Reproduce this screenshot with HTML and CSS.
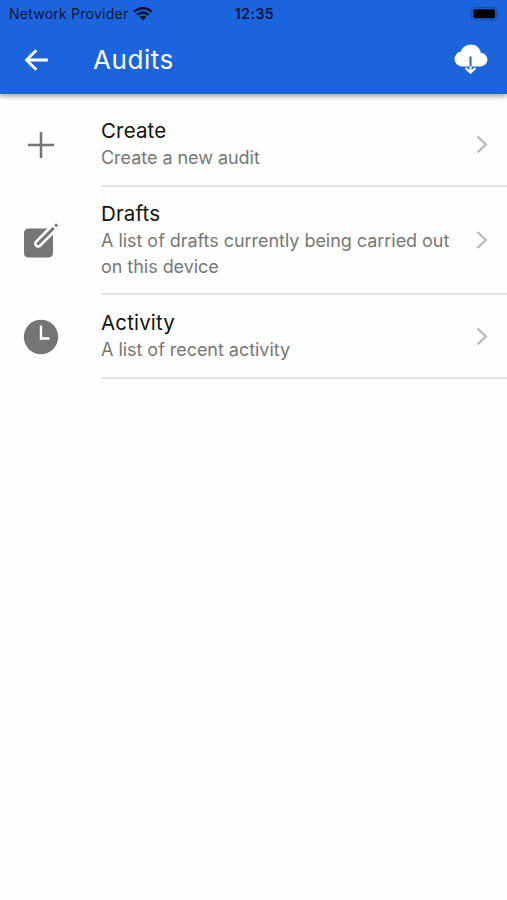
FILE: index.html
```html
<!DOCTYPE html>
<html lang="en">
<head>
<meta charset="utf-8">
<title>Audits</title>
<link rel="stylesheet" href="styles.css">
</head>
<body>
<header class="header">
  <div class="status">
    <div class="carrier"><span class="carrier-name">Network Provider</span>
      <svg class="wifi" width="20" height="14" viewBox="0 0 20 14"><path d="M1.300 4.700a12.500 12.500 0 0 1 17.400 0M4.300 7.900a8.200 8.200 0 0 1 11.400 0" fill="none" stroke="#06163a" stroke-width="2.600"/><path d="M6.600 10.100a4.900 4.900 0 0 1 6.800 0L10 13.500z" fill="#06163a"/></svg>
    </div>
    <span class="time">12:35</span>
    <svg class="battery" width="30" height="14" viewBox="0 0 30 14"><rect x="1.600" y=".6" width="25" height="12.400" rx="3.500" fill="none" stroke="#164cae" stroke-width="1.100"/><rect x="3.300" y="2.300" width="21.800" height="9" rx="2" fill="#000"/><path d="M28 4.800q2 2 0 4z" fill="#164cae"/></svg>
  </div>
  <div class="toolbar">
    <svg class="back" width="26" height="24" viewBox="0 0 26 24"><path d="M12.300 2.200 2.500 12l9.800 9.800M2.500 12h21.300" fill="none" stroke="#fff" stroke-width="2.800"/></svg>
    <h1 class="heading">Audits</h1>
    <svg class="cloud" width="36" height="32" viewBox="0 0 36 32"><path d="M8.500 22.500a7.500 7.500 0 0 1-.6-14.900C9.200 3.500 13 .5 18 .5c5 0 9 3.500 9.800 8.200 3.700.4 6.600 3.200 6.600 6.900 0 3.900-3.200 6.900-7 6.900z" fill="#fff"/><path d="M17.500 12.500v10" stroke="#1c64dd" stroke-width="2"/><path d="M17.500 22.500v6M12.500 24l5 4.700 5-4.700" fill="none" stroke="#fff" stroke-width="2.200"/></svg>
  </div>
</header>
<main class="list">
  <section class="row">
    <div class="icon"><svg width="26" height="26" viewBox="0 0 26 26"><path d="M13 0v26M0 13h26" stroke="#757575" stroke-width="2.500"/></svg></div>
    <div class="content"><div class="copy"><h2 class="title">Create</h2><p class="desc">Create a new audit</p></div>
      <svg class="chevron" width="12" height="20" viewBox="0 0 12 20"><path d="m1.500 2.500 8.300 8-8.300 8" fill="none" stroke="#b9b9b9" stroke-width="2.300"/></svg></div>
  </section>
  <section class="row row-tall">
    <div class="icon"><svg width="36" height="36" viewBox="0 0 36 36"><rect x="1" y="5.500" width="29" height="29" rx="4.500" fill="#757575"/><path d="M15.200 20.600 31 4.800" stroke="#fff" stroke-width="8.400" stroke-linecap="round"/><path d="M14.300 21.500 30.800 5M32.200 3.300l1.900-1.900" stroke="#757575" stroke-width="3"/></svg></div>
    <div class="content"><div class="copy"><h2 class="title">Drafts</h2><p class="desc">A list of drafts currently being carried out<br>on this device</p></div>
      <svg class="chevron" width="12" height="20" viewBox="0 0 12 20"><path d="m1.500 2 8.300 8-8.300 8" fill="none" stroke="#b9b9b9" stroke-width="2.300"/></svg></div>
  </section>
  <section class="row">
    <div class="icon"><svg width="36" height="36" viewBox="0 0 36 36"><circle cx="18" cy="18" r="17.200" fill="#757575"/><path d="M18 6.500v13h8.500" fill="none" stroke="#fff" stroke-width="2.400"/></svg></div>
    <div class="content"><div class="copy"><h2 class="title">Activity</h2><p class="desc">A list of recent activity</p></div>
      <svg class="chevron" width="12" height="20" viewBox="0 0 12 20"><path d="m1.500 2.500 8.300 8-8.300 8" fill="none" stroke="#b9b9b9" stroke-width="2.300"/></svg></div>
  </section>
</main>
</body>
</html>
```
FILE: styles.css
```css
* { box-sizing: border-box; }
body { margin: 0; background: #fefefe; font-family: Inter, "Liberation Sans", sans-serif; }
svg { display: block; flex: none; }
h1, h2, p { margin: 0; font-weight: 400; white-space: nowrap; }
.header { height: 94px; background: #1c64dd; box-shadow: 0 2px 5px rgba(0, 0, 0, .4); }
.status { height: 28px; display: grid; grid-template-columns: 1fr auto 1fr; align-items: center; padding: 0 7px 0 9px; color: #06163a; font-size: 14px; line-height: 28px; }
.carrier { display: flex; align-items: center; gap: 5px; }
.carrier-name { letter-spacing: .24px; }
.time { font-weight: 600; letter-spacing: .5px; }
.battery { justify-self: end; }
.toolbar { height: 66px; display: flex; align-items: center; padding: 0 18px 3px 24px; }
.heading { margin-left: 43px; color: #fff; font-size: 26px; line-height: 36px; letter-spacing: .55px; }
.cloud { margin-left: auto; }
.list { padding-top: 9px; }
.row { display: flex; height: 83.500px; }
.row-tall { height: 108.500px; }
.icon { width: 101px; padding-right: 19px; display: flex; align-items: center; justify-content: center; }
.content { flex: 1; display: flex; align-items: center; justify-content: space-between; padding-right: 19px; border-bottom: 2px solid #e6e6e6; }
.title { color: #111; font-size: 20.500px; line-height: 28px; letter-spacing: .15px; }
.desc { color: #777; font-size: 18px; line-height: 26px; letter-spacing: -.04px; }
```
